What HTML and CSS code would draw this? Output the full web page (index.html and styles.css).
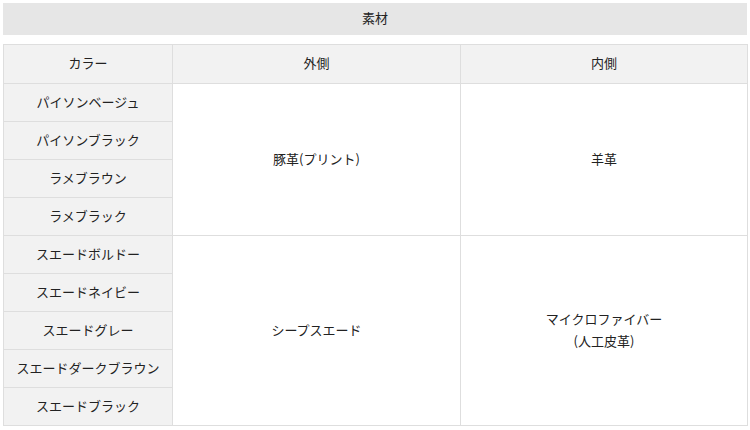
FILE: index.html
```html
<!DOCTYPE html>
<html lang="ja">
<head>
<meta charset="utf-8">
<link rel="stylesheet" href="styles.css">
</head>
<body>
<div class="page">
  <div class="title">素材</div>
  <table class="spec">
    <colgroup>
      <col class="c1"><col class="c2"><col class="c3">
    </colgroup>
    <thead>
      <tr><th>カラー</th><th>外側</th><th>内側</th></tr>
    </thead>
    <tbody>
      <tr><th>パイソンベージュ</th><td rowspan="4">豚革(プリント)</td><td rowspan="4">羊革</td></tr>
      <tr><th>パイソンブラック</th></tr>
      <tr><th>ラメブラウン</th></tr>
      <tr><th>ラメブラック</th></tr>
      <tr><th>スエードボルドー</th><td rowspan="5">シープスエード</td><td rowspan="5">マイクロファイバー<br>(人工皮革)</td></tr>
      <tr><th>スエードネイビー</th></tr>
      <tr><th>スエードグレー</th></tr>
      <tr><th>スエードダークブラウン</th></tr>
      <tr><th>スエードブラック</th></tr>
    </tbody>
  </table>
</div>
</body>
</html>
```

FILE: styles.css
```css
html, body {
  margin: 0;
  padding: 0;
  background: #fff;
}
.page {
  padding: 3px;
  font-family: "Noto Sans CJK JP", "Noto Sans", sans-serif;
  font-size: 13px;
  color: #222;
}
.title {
  background: #e6e6e6;
  height: 30px;
  line-height: 30px;
  padding-bottom: 2px;
  text-align: center;
  margin-bottom: 9px;
}
.spec {
  width: 744px;
  border-collapse: collapse;
  table-layout: fixed;
  border: 1px solid #dcdcdc;
}
.c1 { width: 169px; }
.c2 { width: 288px; }
.c3 { width: 287px; }
.spec th, .spec td {
  border: 1px solid #dedede;
  text-align: center;
  vertical-align: middle;
  font-weight: normal;
  line-height: 22px;
  padding: 0 0 2px;
}
.spec th {
  background: #f2f2f2;
  height: 35px;
}
.spec thead th {
  height: 36px;
}
.spec td {
  background: #fff;
}
```
